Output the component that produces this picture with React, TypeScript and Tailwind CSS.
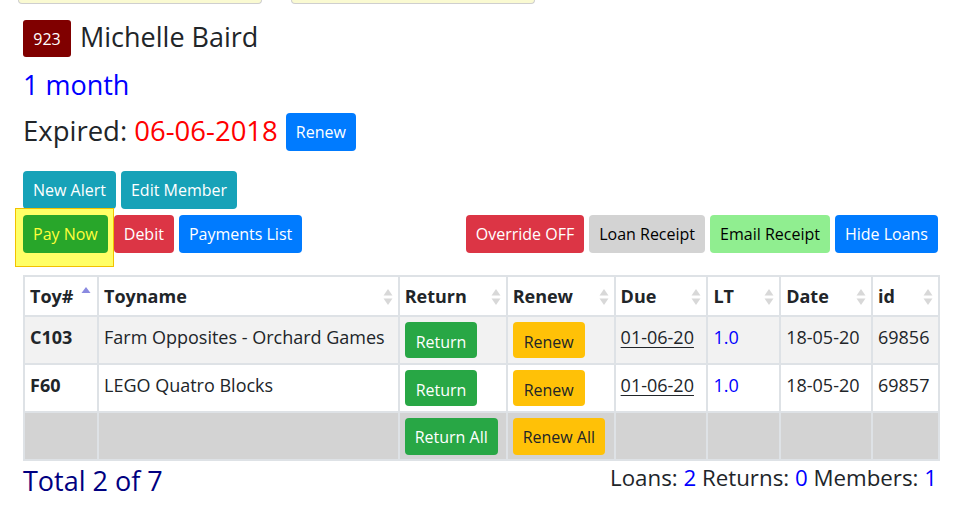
import React from "react";

type Loan = { toy: string; name: string; due: string; lt: string; date: string; id: string };

const loans: Loan[] = [
  { toy: "C103", name: "Farm Opposites - Orchard Games", due: "01-06-20", lt: "1.0", date: "18-05-20", id: "69856" },
  { toy: "F60", name: "LEGO Quatro Blocks", due: "01-06-20", lt: "1.0", date: "18-05-20", id: "69857" },
];

function SortIcon({ active }: { active?: boolean }) {
  if (active) {
    return (
      <svg width="10" height="16" viewBox="0 0 10 16" className="inline-block -mt-[8px]">
        <path d="M5 2 L9.5 8 L0.5 8 Z" fill="#8a8ae0" />
      </svg>
    );
  }
  return (
    <svg width="10" height="18" viewBox="0 0 10 18" className="inline-block">
      <path d="M5 1 L9.5 7.5 L0.5 7.5 Z" fill="#d8d8d8" />
      <path d="M5 17 L9.5 10.5 L0.5 10.5 Z" fill="#d8d8d8" />
    </svg>
  );
}

function Th({ label, w, active }: { label: string; w: string; active?: boolean }) {
  return (
    <th className={`${w} border-2 border-[#dee2e6] border-b-[#2b2b2b] border-b px-[5px] pt-[6px] pb-[5px] text-left align-top font-bold`}>
      <div className={`flex items-center ${active ? "gap-[8px]" : "justify-between"}`}>
        <span>{label}</span>
        <SortIcon active={active} />
      </div>
    </th>
  );
}

const btn = "rounded-[4px] px-[10px] h-[38px] text-[16px] leading-none";
const td = "border-2 border-[#dee2e6] px-[5px] pt-[7px] pb-[6px] align-top";
const tdBtn = "border-2 border-[#dee2e6] px-[5px] pt-[5px] pb-[4px] align-top";
const foot = "border-2 border-[#dee2e6] border-t border-t-[#2b2b2b]";

export default function App() {
  return (
    <div className="w-[954px] h-[526px] overflow-hidden bg-white text-[#212529] font-['Segoe_UI','Open_Sans',sans-serif]">
      <div className="flex gap-[29px] pl-[18px]">
        <div className="w-[244px] h-[4px] bg-[#fafad2] border border-t-0 border-[#cfcfcf] rounded-b-[5px]" />
        <div className="w-[244px] h-[4px] bg-[#fafad2] border border-t-0 border-[#cfcfcf] rounded-b-[5px]" />
      </div>

      <div className="pl-[23px] pr-[16px]">
        <div className="flex items-center gap-[9px] mt-[16px]">
          <span className="bg-[#800000] text-white text-[16px] rounded-[3px] w-[48px] h-[37px] flex items-center justify-center">923</span>
          <span className="text-[27px] leading-none -mt-[5px]">Michelle Baird</span>
        </div>
        <div className="text-[27px] text-[#0000ff] mt-[10px] leading-[36px]">1 month</div>
        <div className="flex items-center mt-[10px] text-[27.5px] leading-[36px]">
          <span className="-mt-[3px]">Expired:&nbsp;</span>
          <span className="text-[#ff0000] -mt-[3px]">06-06-2018</span>
          <button className={`${btn} ml-[8px] h-[37px] bg-[#007bff] text-white`}>Renew</button>
        </div>

        <div className="flex gap-[5px] mt-[20px]">
          <button className={`${btn} bg-[#17a2b8] text-white`}>New Alert</button>
          <button className={`${btn} bg-[#17a2b8] text-white`}>Edit Member</button>
        </div>

        <div className="flex items-start mt-[6px]">
          <div className="-ml-[8px] -mt-[7px] bg-[#ffff66] border border-[#f2c200] pl-[7px] pt-[6px] pr-[5px] pb-[13px]">
            <button className={`${btn} bg-[#28a62a] text-[#ffff3a]`}>Pay Now</button>
          </div>
          <div className="flex gap-[5px] ml-[0px]">
            <button className={`${btn} bg-[#dc3545] text-white`}>Debit</button>
            <button className={`${btn} bg-[#007bff] text-white`}>Payments List</button>
          </div>
          <div className="flex gap-[5px] ml-auto">
            <button className={`${btn} bg-[#dc3545] text-white`}>Override OFF</button>
            <button className={`${btn} bg-[#d3d3d3] text-black`}>Loan Receipt</button>
            <button className={`${btn} bg-[#90ee90] text-black`}>Email Receipt</button>
            <button className={`${btn} bg-[#007bff] text-white`}>Hide Loans</button>
          </div>
        </div>

        <table className="mt-[8px] w-[917px] border-collapse border-2 border-[#dee2e6] text-[18px] leading-[27px]">
          <thead>
            <tr className="h-[40px]">
              <Th label="Toy#" w="w-[74px]" active />
              <Th label="Toyname" w="w-[302px]" />
              <Th label="Return" w="w-[108px]" />
              <Th label="Renew" w="w-[108px]" />
              <Th label="Due" w="w-[93px]" />
              <Th label="LT" w="w-[73px]" />
              <Th label="Date" w="w-[92px]" />
              <Th label="id" w="w-[67px]" />
            </tr>
          </thead>
          <tbody>
            {loans.map((l, i) => (
              <tr key={l.id} className={`h-[48px] ${i % 2 === 0 ? "bg-[#f2f2f2]" : "bg-white"}`}>
                <td className={`${td} font-bold`}>{l.toy}</td>
                <td className={td}>{l.name}</td>
                <td className={tdBtn}>
                  <button className="bg-[#28a745] text-white rounded-[4px] px-[11px] h-[36px] text-[16px] leading-none pt-[4px]">Return</button>
                </td>
                <td className={tdBtn}>
                  <button className="bg-[#ffc107] text-[#212529] rounded-[4px] px-[11px] h-[36px] text-[16px] leading-none pt-[4px]">Renew</button>
                </td>
                <td className={`${td} underline underline-offset-[3px]`}>{l.due}</td>
                <td className={`${td} text-[#0000ff]`}>{l.lt}</td>
                <td className={td}>{l.date}</td>
                <td className={td}>{l.id}</td>
              </tr>
            ))}
            <tr className="bg-[#d3d3d3] h-[47px]">
              <td className={foot} />
              <td className={foot} />
              <td className={`${foot} px-[5px] pt-[5px] pb-[4px] align-top`}>
                <button className="bg-[#28a745] text-white rounded-[4px] px-[10px] h-[37px] text-[16px] leading-none whitespace-nowrap">Return All</button>
              </td>
              <td className={`${foot} px-[5px] pt-[5px] pb-[4px] align-top`}>
                <button className="bg-[#ffc107] text-[#212529] rounded-[4px] px-[10px] h-[37px] text-[16px] leading-none whitespace-nowrap">Renew All</button>
              </td>
              <td className={foot} />
              <td className={foot} />
              <td className={foot} />
              <td className={foot} />
            </tr>
          </tbody>
        </table>

        <div className="flex items-start justify-between mt-[2px]">
          <span className="text-[27px] text-[#000080] leading-[36px]">Total 2 of 7</span>
          <span className="text-[22.3px] leading-[30px] pr-[1px]">
            Loans: <span className="text-[#0000ff]">2</span> Returns: <span className="text-[#0000ff]">0</span> Members: <span className="text-[#0000ff]">1</span>
          </span>
        </div>
      </div>
    </div>
  );
}
